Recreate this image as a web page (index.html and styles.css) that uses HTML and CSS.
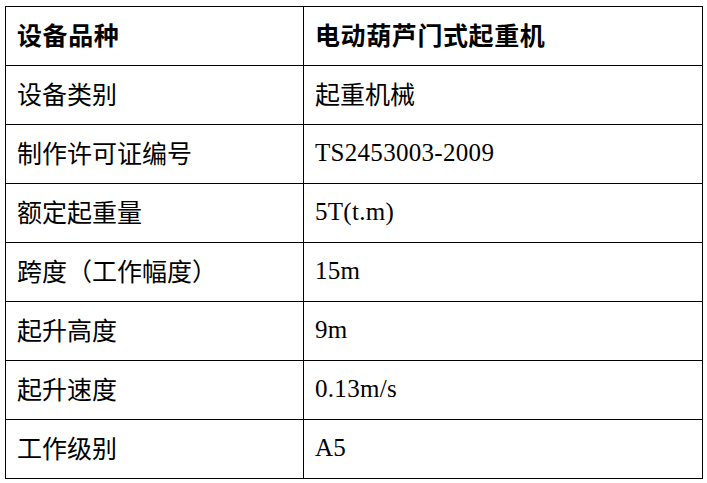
FILE: index.html
```html
<!DOCTYPE html>
<html lang="zh-CN">
<head>
<meta charset="utf-8">
<title>设备参数</title>
<link rel="stylesheet" href="styles.css">
</head>
<body>
<table class="spec">
  <colgroup><col class="c1"><col class="c2"></colgroup>
  <tr class="head"><td>设备品种</td><td>电动葫芦门式起重机</td></tr>
  <tr><td>设备类别</td><td>起重机械</td></tr>
  <tr><td>制作许可证编号</td><td class="val">TS2453003-2009</td></tr>
  <tr><td>额定起重量</td><td class="val">5T(t.m)</td></tr>
  <tr><td>跨度（工作幅度）</td><td class="val">15m</td></tr>
  <tr><td>起升高度</td><td class="val">9m</td></tr>
  <tr><td>起升速度</td><td class="val">0.13m/s</td></tr>
  <tr><td>工作级别</td><td class="val">A5</td></tr>
</table>
</body>
</html>
```

FILE: styles.css
```css
html, body {
  margin: 0;
  padding: 0;
  background: #fff;
}
body {
  padding: 6px 0 0 5px;
}
.spec {
  border-collapse: collapse;
  width: 697px;
  table-layout: fixed;
  font-family: "Noto Sans CJK SC", sans-serif;
  font-size: 25px;
  color: #000;
}
.spec .c1 { width: 298px; }
.spec .c2 { width: 399px; }
.spec td {
  border: 1px solid #000;
  height: 59px;
  box-sizing: border-box;
  padding: 0 10px 3px 11px;
  vertical-align: middle;
  line-height: 1;
  white-space: nowrap;
}
.spec .head td {
  font-weight: 700;
  letter-spacing: 0.6px;
}
.spec td.val {
  font-family: "Liberation Serif", "Noto Sans CJK SC", serif;
  letter-spacing: 0.3px;
}
```
